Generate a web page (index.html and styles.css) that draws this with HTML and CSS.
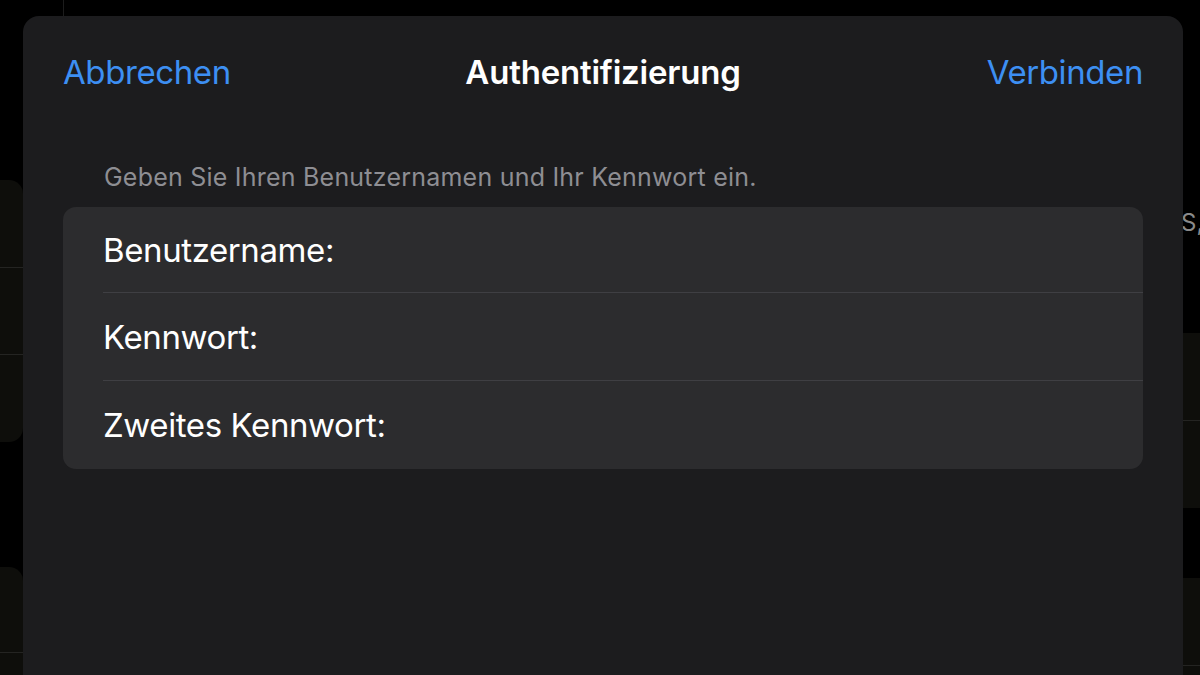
FILE: index.html
```html
<!DOCTYPE html>
<html lang="de">
<head>
<meta charset="utf-8">
<title>Authentifizierung</title>
<link rel="stylesheet" href="styles.css">
</head>
<body>
<div class="backdrop">
  <div class="bg-line"></div>
  <div class="bg-panel bg-left-1"><div class="bg-sep"></div><div class="bg-sep"></div></div>
  <div class="bg-panel bg-left-2"><div class="bg-sep"></div></div>
  <div class="bg-text">S,</div>
  <div class="bg-panel bg-right-1"><div class="bg-sep"></div></div>
  <div class="bg-panel bg-right-2"><div class="bg-sep"></div></div>
</div>
<div class="sheet">
  <header class="nav">
    <span class="nav-btn">Abbrechen</span>
    <h1 class="nav-title">Authentifizierung</h1>
    <span class="nav-btn nav-btn-right">Verbinden</span>
  </header>
  <p class="hint">Geben Sie Ihren Benutzernamen und Ihr Kennwort ein.</p>
  <div class="group">
    <div class="row">Benutzername:</div>
    <div class="row">Kennwort:</div>
    <div class="row">Zweites Kennwort:</div>
  </div>
</div>
</body>
</html>
```

FILE: styles.css
```css
* { box-sizing: border-box; }
html, body {
  margin: 0;
  padding: 0;
  width: 1200px;
  height: 675px;
  overflow: hidden;
  background: #000;
  font-family: Inter, "Noto Sans", sans-serif;
}
body {
  position: relative;
  display: flex;
  flex-direction: column;
  padding: 16px 17px 0 23px;
}
.backdrop {
  position: absolute;
  inset: 0;
  z-index: 0;
  overflow: hidden;
}
.bg-line {
  position: absolute;
  left: 63px;
  top: 0;
  width: 1px;
  height: 16px;
  background: #1c1c1c;
}
.bg-panel {
  position: absolute;
  background: #0e0e0b;
  border-radius: 14px;
  display: flex;
  flex-direction: column;
  justify-content: space-evenly;
}
.bg-sep { height: 1px; background: #242422; }
.bg-left-1 { left: -20px; width: 43px; top: 180px; height: 262px; }
.bg-left-2 { left: -20px; width: 43px; top: 567px; height: 170px; }
.bg-right-1 { left: 1183px; width: 40px; top: 333px; height: 175px; border-radius: 0; }
.bg-right-2 { left: 1183px; width: 40px; top: 578px; height: 175px; border-radius: 0; }
.bg-text {
  position: absolute;
  left: 1181px;
  top: 208px;
  color: #8a8a8a;
  font-size: 24px;
  white-space: nowrap;
}
.sheet {
  position: relative;
  z-index: 1;
  flex: 1;
  background: #1c1c1e;
  border-radius: 16px 16px 0 0;
  padding: 0 40px;
}
.nav {
  display: grid;
  grid-template-columns: 1fr auto 1fr;
  align-items: center;
  height: 112px;
}
.nav-btn {
  color: #3d8ff3;
  font-size: 33px;
  letter-spacing: -0.4px;
}
.nav-btn-right { justify-self: end; }
.nav-title {
  margin: 0;
  color: #fff;
  font-size: 33px;
  font-weight: 600;
  letter-spacing: -0.2px;
}
.hint {
  margin: 34px 0 0 41px;
  height: 45px;
  color: #8e8e93;
  font-size: 25px;
  letter-spacing: 0.22px;
}
.group {
  background: #2c2c2e;
  border-radius: 13px;
  padding-left: 40px;
  display: flex;
  flex-direction: column;
}
.row {
  height: 88px;
  display: flex;
  align-items: center;
  color: #fff;
  font-size: 33px;
  letter-spacing: -0.4px;
  border-bottom: 1px solid #3f3f43;
}
.row:first-child { height: 86px; }
.row:last-child { border-bottom: 0; }
```
